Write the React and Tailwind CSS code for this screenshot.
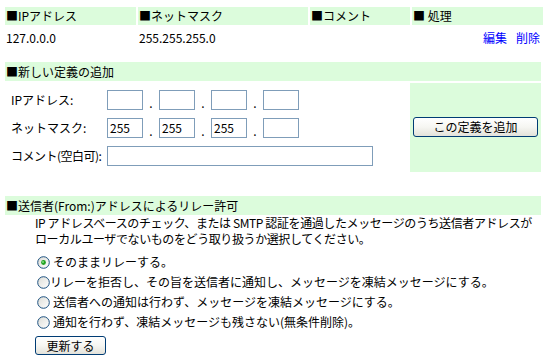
import React from "react";

const font = { fontFamily: '"Noto Sans CJK JP", "Noto Sans", sans-serif' };

function Radio({ checked }) {
  return (
    <svg width="13" height="13" viewBox="0 0 13 13" className="shrink-0">
      <defs>
        <linearGradient id="rg" x1="0" y1="0" x2="1" y2="1">
          <stop offset="0" stopColor="#dcdcd6" />
          <stop offset="1" stopColor="#ffffff" />
        </linearGradient>
      </defs>
      <circle cx="6.5" cy="6.5" r="5.8" fill="url(#rg)" stroke="#1c5180" strokeWidth="1" />
      {checked && <circle cx="6.5" cy="6.5" r="2.4" fill="#21a121" />}
      {checked && <circle cx="6" cy="6" r="1" fill="#7ee07e" />}
    </svg>
  );
}

function XpButton({ children, className }) {
  return (
    <button
      className={
        "flex items-center justify-center rounded-[3px] border border-[#003c74] bg-gradient-to-b from-[#ffffff] via-[#f6f6f2] to-[#e3e2da] text-[12px] leading-none text-black " +
        className
      }
      style={font}
    >
      {children}
    </button>
  );
}

function Box({ value, w = "w-[36px]" }) {
  return (
    <div className={"h-[20px] border border-[#7f9db9] bg-white pl-[2px] text-[12px] leading-[18px] text-black " + w}>
      {value}
    </div>
  );
}

function Dot() {
  return <div className="flex h-[20px] w-[16px] items-end justify-center pb-[1px] text-[12px] leading-none">.</div>;
}

function IpRow({ values }) {
  return (
    <div className="flex">
      <Box value={values[0]} />
      <Dot />
      <Box value={values[1]} />
      <Dot />
      <Box value={values[2]} />
      <Dot />
      <Box value={values[3]} />
    </div>
  );
}

export default function App() {
  return (
    <div className="h-[364px] w-[549px] bg-white text-[12px] text-black" style={font}>
      <div className="pl-[5px] pt-[7px]">
        <div className="grid grid-cols-[131px_170px_100px_131px] gap-x-[2px]">
          <div className="h-[18px] bg-[#dcfcdc] pl-[1px] leading-[18px]">■IPアドレス</div>
          <div className="h-[18px] bg-[#dcfcdc] pl-[1px] leading-[18px]">■ネットマスク</div>
          <div className="h-[18px] bg-[#dcfcdc] pl-[1px] leading-[18px]">■コメント</div>
          <div className="h-[18px] bg-[#dcfcdc] pl-[1px] leading-[18px]">■ 処理</div>
          <div className="h-[26px] pl-[1px] leading-[26px]">127.0.0.0</div>
          <div className="h-[26px] pl-[1px] leading-[26px]">255.255.255.0</div>
          <div className="h-[26px]"></div>
          <div className="flex h-[26px] justify-end gap-[9px] pr-[3px] leading-[26px] text-[#0000ff]">
            <span>編集</span>
            <span>削除</span>
          </div>
        </div>

        <div className="mt-[11px] w-[536px]">
          <div className="h-[19px] bg-[#dcfcdc] pl-[1px] leading-[19px]">■新しい定義の追加</div>
          <div className="mt-[2px] flex h-[89px]">
            <div className="flex w-[403px] flex-col gap-[8px] pt-[7px]">
              <div className="flex items-center">
                <div className="w-[102px] pl-[6px]">IPアドレス:</div>
                <IpRow values={["", "", "", ""]} />
              </div>
              <div className="flex items-center">
                <div className="w-[102px] pl-[6px]">ネットマスク:</div>
                <IpRow values={["255", "255", "255", ""]} />
              </div>
              <div className="flex items-center">
                <div className="w-[102px] pl-[6px] tracking-[-0.5px] whitespace-nowrap">コメント(空白可):</div>
                <Box value="" w="w-[266px]" />
              </div>
            </div>
            <div className="ml-[2px] flex w-[131px] items-center justify-center bg-[#dcfcdc] pb-[2px]">
              <XpButton className="h-[20px] w-[125px]">この定義を追加</XpButton>
            </div>
          </div>
        </div>

        <div className="mt-[24px] w-[536px]">
          <div className="h-[19px] bg-[#dcfcdc] pl-[1px] leading-[19px]">■送信者(From:)アドレスによるリレー許可</div>
          <div className="flex flex-col pl-[30px] leading-[16px] whitespace-nowrap tracking-[-0.4px]">
            <div>IP アドレスベースのチェック、または SMTP 認証を通過したメッセージのうち送信者アドレスが</div>
            <div>ローカルユーザでないものをどう取り扱うか選択してください。</div>
          </div>
          <div className="mt-[8px] flex flex-col gap-[6px] pl-[32px]">
            <div className="flex h-[14px] items-center gap-[3px]">
              <Radio checked />
              <span>そのままリレーする。</span>
            </div>
            <div className="flex h-[14px] items-center gap-[0px]">
              <Radio />
              <span>リレーを拒否し、その旨を送信者に通知し、メッセージを凍結メッセージにする。</span>
            </div>
            <div className="flex h-[14px] items-center gap-[3px]">
              <Radio />
              <span>送信者への通知は行わず、メッセージを凍結メッセージにする。</span>
            </div>
            <div className="flex h-[14px] items-center gap-[3px]">
              <Radio />
              <span>通知を行わず、凍結メッセージも残さない(無条件削除)。</span>
            </div>
          </div>
          <div className="mt-[7px] pl-[30px]">
            <XpButton className="h-[19px] w-[71px]">更新する</XpButton>
          </div>
        </div>
      </div>
    </div>
  );
}
